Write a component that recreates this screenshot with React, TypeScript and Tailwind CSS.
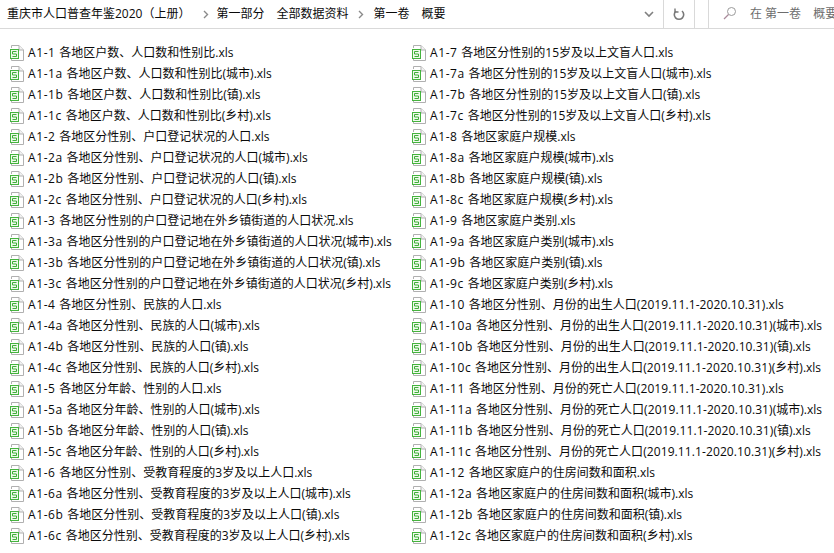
const col1 = [
"A1-1 各地区户数、人口数和性别比.xls","A1-1a 各地区户数、人口数和性别比(城市).xls","A1-1b 各地区户数、人口数和性别比(镇).xls","A1-1c 各地区户数、人口数和性别比(乡村).xls",
"A1-2 各地区分性别、户口登记状况的人口.xls","A1-2a 各地区分性别、户口登记状况的人口(城市).xls","A1-2b 各地区分性别、户口登记状况的人口(镇).xls","A1-2c 各地区分性别、户口登记状况的人口(乡村).xls",
"A1-3 各地区分性别的户口登记地在外乡镇街道的人口状况.xls","A1-3a 各地区分性别的户口登记地在外乡镇街道的人口状况(城市).xls","A1-3b 各地区分性别的户口登记地在外乡镇街道的人口状况(镇).xls","A1-3c 各地区分性别的户口登记地在外乡镇街道的人口状况(乡村).xls",
"A1-4 各地区分性别、民族的人口.xls","A1-4a 各地区分性别、民族的人口(城市).xls","A1-4b 各地区分性别、民族的人口(镇).xls","A1-4c 各地区分性别、民族的人口(乡村).xls",
"A1-5 各地区分年龄、性别的人口.xls","A1-5a 各地区分年龄、性别的人口(城市).xls","A1-5b 各地区分年龄、性别的人口(镇).xls","A1-5c 各地区分年龄、性别的人口(乡村).xls",
"A1-6 各地区分性别、受教育程度的3岁及以上人口.xls","A1-6a 各地区分性别、受教育程度的3岁及以上人口(城市).xls","A1-6b 各地区分性别、受教育程度的3岁及以上人口(镇).xls","A1-6c 各地区分性别、受教育程度的3岁及以上人口(乡村).xls",
];
const col2 = [
"A1-7 各地区分性别的15岁及以上文盲人口.xls","A1-7a 各地区分性别的15岁及以上文盲人口(城市).xls","A1-7b 各地区分性别的15岁及以上文盲人口(镇).xls","A1-7c 各地区分性别的15岁及以上文盲人口(乡村).xls",
"A1-8 各地区家庭户规模.xls","A1-8a 各地区家庭户规模(城市).xls","A1-8b 各地区家庭户规模(镇).xls","A1-8c 各地区家庭户规模(乡村).xls",
"A1-9 各地区家庭户类别.xls","A1-9a 各地区家庭户类别(城市).xls","A1-9b 各地区家庭户类别(镇).xls","A1-9c 各地区家庭户类别(乡村).xls",
"A1-10 各地区分性别、月份的出生人口(2019.11.1-2020.10.31).xls","A1-10a 各地区分性别、月份的出生人口(2019.11.1-2020.10.31)(城市).xls","A1-10b 各地区分性别、月份的出生人口(2019.11.1-2020.10.31)(镇).xls","A1-10c 各地区分性别、月份的出生人口(2019.11.1-2020.10.31)(乡村).xls",
"A1-11 各地区分性别、月份的死亡人口(2019.11.1-2020.10.31).xls","A1-11a 各地区分性别、月份的死亡人口(2019.11.1-2020.10.31)(城市).xls","A1-11b 各地区分性别、月份的死亡人口(2019.11.1-2020.10.31)(镇).xls","A1-11c 各地区分性别、月份的死亡人口(2019.11.1-2020.10.31)(乡村).xls",
"A1-12 各地区家庭户的住房间数和面积.xls","A1-12a 各地区家庭户的住房间数和面积(城市).xls","A1-12b 各地区家庭户的住房间数和面积(镇).xls","A1-12c 各地区家庭户的住房间数和面积(乡村).xls",
];

function XlsIcon() {
  return (
    <svg width="14" height="16" viewBox="0 0 14 16" className="shrink-0">
      <path d="M1.5 3V0.5H9L13.5 5V15.5H1.5V13" fill="#fff" stroke="#b0b0b0" />
      <path d="M9 0.5V5H13.5" fill="#f2f2f2" stroke="#b0b0b0" />
      <rect x="0.5" y="4.5" width="8" height="9" fill="#effaec" stroke="#45b33e" />
      <path d="M6.5 6.5H2.5V9H6.5V11.5H2.5" fill="none" stroke="#3fae38" />
    </svg>
  );
}

function Chevron() {
  return (
    <svg width="6" height="9" viewBox="0 0 6 9" className="shrink-0">
      <path d="M1 1L4.5 4.5L1 8" fill="none" stroke="#8a8a8a" strokeWidth="1.4" />
    </svg>
  );
}

function Label({ text }: { text: string }) {
  const space = text.indexOf(" ") + 1;
  const prefix = text.slice(0, space);
  const rest = text.slice(space);
  const date = "(2019.11.1-2020.10.31)";
  const at = rest.indexOf(date);
  return (
    <span>
      <span className="tracking-[0.6px]">{prefix}</span>
      {at < 0 ? (
        rest
      ) : (
        <>
          {rest.slice(0, at)}
          <span className="tracking-[0.1px]">{date}</span>
          {rest.slice(at + date.length)}
        </>
      )}
    </span>
  );
}

function Column({ items, width }: { items: string[]; width: string }) {
  return (
    <div className={`flex flex-col shrink-0 ${width}`}>
      {items.map((t) => (
        <div key={t} className="flex items-center h-[21px] gap-[4px] whitespace-nowrap">
          <XlsIcon />
          <Label text={t} />
        </div>
      ))}
    </div>
  );
}

export default function App() {
  return (
    <div className="w-[834px] h-[553px] overflow-hidden bg-white text-[12px] text-[#0a0a0a] font-['Open_Sans','Noto_Sans_CJK_SC',sans-serif]">
      <div className="flex items-stretch h-[29px] border-b border-[#d9d9d9]">
        <div className="flex items-center w-[663px] pl-[7px] whitespace-nowrap shrink-0">
          <span>重庆市人口普查年鉴2020（上册）</span>
          <span className="ml-[13px] mr-[7px]"><Chevron /></span>
          <span>第一部分</span>
          <span className="ml-[12px]">全部数据资料</span>
          <span className="ml-[10px] mr-[9px]"><Chevron /></span>
          <span>第一卷</span>
          <span className="ml-[12px]">概要</span>
          <span className="ml-auto mr-[9px] flex">
            <svg width="10" height="7" viewBox="0 0 10 7"><path d="M1 1L5 5L9 1" fill="none" stroke="#808080" strokeWidth="1.6" /></svg>
          </span>
        </div>
        <div className="flex items-center justify-center w-[32px] border-x border-[#d9d9d9] shrink-0">
          <svg width="12" height="13" viewBox="0 0 12 13"><path d="M3 3A4.7 4.7 0 1 0 9 3" fill="none" stroke="#787878" strokeWidth="1.6" /><path d="M2 0.5V4H5.5" fill="none" stroke="#787878" strokeWidth="1.4" /></svg>
        </div>
        <div className="flex items-center w-[127px] ml-[13px] border-l border-[#d9d9d9] pl-[14px] text-[#6d6d6d] whitespace-nowrap shrink-0">
          <svg width="14" height="14" viewBox="0 0 14 14" className="shrink-0 mb-[3px]"><circle cx="8.5" cy="5.5" r="4" fill="none" stroke="#9a9a9a" /><path d="M5.5 8.5L1 13" stroke="#a98a9a" strokeWidth="1.2" /></svg>
          <span className="ml-[13px]">在 第一卷</span>
          <span className="ml-[12px]">概要</span>
        </div>
      </div>
      <div className="flex pt-[13px] pl-[10px]">
        <Column items={col1} width="w-[402px]" />
        <Column items={col2} width="w-[422px]" />
      </div>
    </div>
  );
}
